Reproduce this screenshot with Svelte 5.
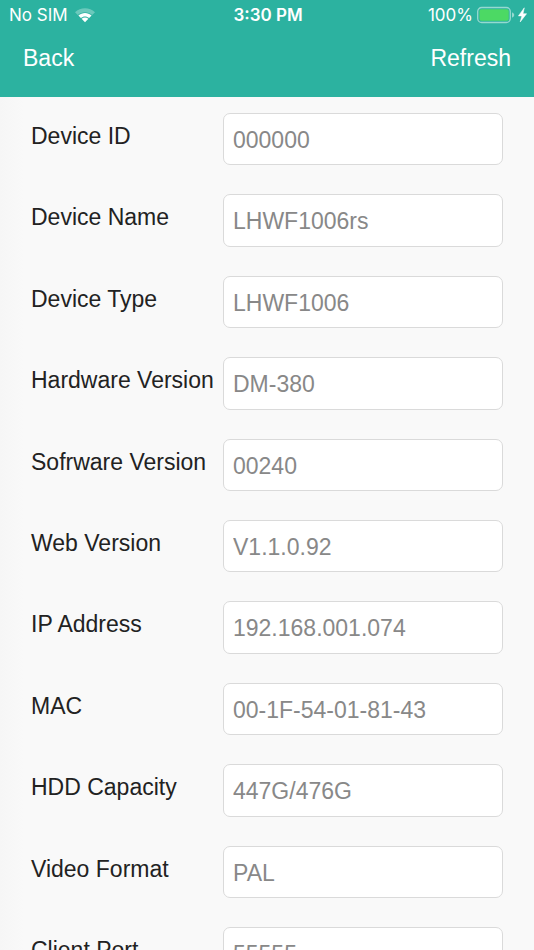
<script>
  const fields = [
    { id: 'device-id', label: 'Device ID', value: '000000' },
    { id: 'device-name', label: 'Device Name', value: 'LHWF1006rs' },
    { id: 'device-type', label: 'Device Type', value: 'LHWF1006' },
    { id: 'hardware', label: 'Hardware Version', value: 'DM-380' },
    { id: 'software', label: 'Sofrware Version', value: '00240' },
    { id: 'web', label: 'Web Version', value: 'V1.1.0.92' },
    { id: 'ip', label: 'IP Address', value: '192.168.001.074' },
    { id: 'mac', label: 'MAC', value: '00-1F-54-01-81-43' },
    { id: 'hdd', label: 'HDD Capacity', value: '447G/476G' },
    { id: 'video', label: 'Video Format', value: 'PAL' },
    { id: 'port', label: 'Client Port', value: '55555' }
  ];
</script>

<div class="screen">
  <header>
    <div class="status">
      <div class="carrier">
        <span>No SIM</span>
        <svg width="20" height="15" viewBox="0 0 20 15" aria-hidden="true">
          <path d="M0 4.3C5.4 -1.1 14.6 -1.1 20 4.3L17.2 7C13 3.2 7 3.2 2.8 7Z" fill="#fff" opacity="0.3" />
          <path d="M3.4 7.5C7.1 4.1 12.9 4.1 16.6 7.5L14.1 10C11.8 7.9 8.2 7.9 5.9 10Z" fill="#fff" />
          <path d="M6.6 10.8C8.5 9.1 11.5 9.1 13.4 10.8L10 14.2Z" fill="#fff" />
        </svg>
      </div>
      <time>3:30 PM</time>
      <div class="power">
        <span>100%</span>
        <svg width="50" height="18" viewBox="0 0 50 18" aria-hidden="true">
          <rect x="0.7" y="1.5" width="32.6" height="15" rx="4" fill="none" stroke="#fff" stroke-opacity="0.5" stroke-width="1.3" />
          <rect x="2.5" y="3.2" width="29.2" height="11.6" rx="2" fill="#4cd964" />
          <path d="M35 6.2Q37.3 7.2 37.3 9T35 11.8Z" fill="#fff" opacity="0.5" />
          <path d="M47.3 1.8L41.4 9.9H44.8L43.2 16L49.6 7.7H46Z" fill="#fff" stroke="#fff" stroke-width="0.5" />
        </svg>
      </div>
    </div>
    <nav>
      <button type="button">Back</button>
      <button type="button">Refresh</button>
    </nav>
  </header>

  <main>
    {#each fields as field (field.id)}
      <div class="row">
        <label for={field.id}>{field.label}</label>
        <input id={field.id} type="text" value={field.value} readonly />
      </div>
    {/each}
  </main>
</div>

<style>
  :global(body) {
    margin: 0;
    background: #f9f9f9;
  }

  .screen {
    height: 100vh;
    display: flex;
    flex-direction: column;
    background: linear-gradient(to right, #f6f6f6, #f9f9f9 24px);
    font-family: "Liberation Sans", Arial, sans-serif;
    font-size: 23px;
  }

  header {
    flex: none;
    padding-bottom: 24px;
    background: #2cb2a0;
    color: #fff;
  }

  .status {
    display: grid;
    grid-template-columns: 1fr auto 1fr;
    align-items: center;
    height: 30px;
    padding: 0 7px 0 9px;
    font-family: Inter, sans-serif;
    font-size: 17px;
    line-height: 30px;
  }

  .carrier,
  .power {
    display: flex;
    align-items: center;
    gap: 7px;
  }

  .power {
    justify-content: flex-end;
    gap: 4px;
  }

  time {
    font-weight: 600;
  }

  nav {
    display: flex;
    justify-content: space-between;
    padding: 13px 23px 0;
  }

  button {
    padding: 0;
    border: 0;
    background: none;
    color: inherit;
    font: inherit;
    line-height: 30px;
    cursor: pointer;
  }

  main {
    flex: 1;
    min-height: 0;
    overflow-y: auto;
    scrollbar-width: none;
    padding: 16px 31px 0;
  }

  .row {
    display: grid;
    grid-template-columns: 192px 1fr;
    align-items: start;
    margin-bottom: 29px;
  }

  label {
    color: #222;
    line-height: 46px;
    white-space: nowrap;
  }

  input {
    box-sizing: border-box;
    width: 100%;
    height: 52px;
    margin: 0;
    padding: 2px 9px 0;
    border: 1px solid #dadada;
    border-radius: 7px;
    background: #fff;
    color: #888;
    font: inherit;
    outline: none;
  }

  .row:nth-child(5n + 2) input,
  .row:nth-child(5n + 4) input {
    height: 53px;
  }
</style>
